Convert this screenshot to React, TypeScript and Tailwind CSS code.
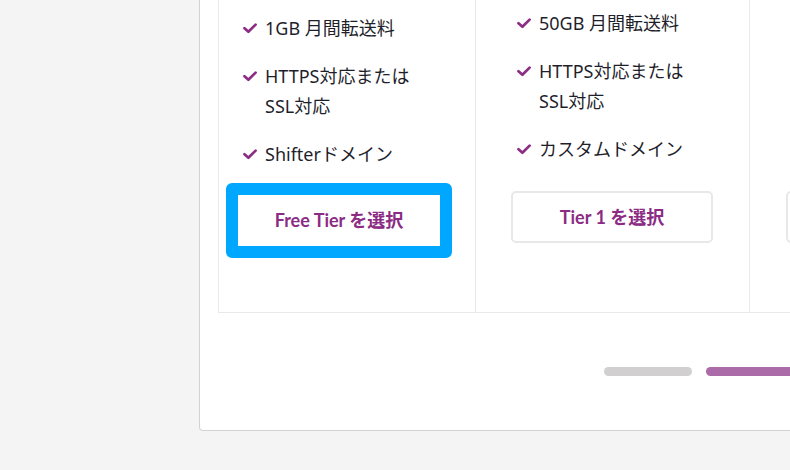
import React from "react";

function Check() {
  return (
    <svg width="14" height="11" viewBox="0 0 14 11" className="shrink-0">
      <path d="M1.5 5.2 L5.4 8.8 L12.6 1.6" fill="none" stroke="#8b2d84" strokeWidth="2.7" strokeLinecap="round" strokeLinejoin="round" />
    </svg>
  );
}

function Item({ children }: { children: React.ReactNode }) {
  return (
    <li className="flex items-start gap-[8px]">
      <span className="flex h-[30px] items-center pt-[1px]">
        <Check />
      </span>
      <span className="w-[170px] font-['Noto_Sans','Noto_Sans_CJK_JP',sans-serif] text-[18px] leading-[30px] text-[#1f1f2c]">
        {children}
      </span>
    </li>
  );
}

export default function App() {
  return (
    <div className="h-[470px] w-[790px] overflow-hidden bg-[#f4f4f4] font-['Lato','Noto_Sans_CJK_JP',sans-serif]">
      <div className="ml-[199px] w-[1100px] rounded-b-[4px] border-x border-b border-[#d2d2d2] bg-white">
        <div className="ml-[18px] flex border-b border-l border-[#e9e9e9]">
          <div className="h-[312px] w-[257px] shrink-0 border-r border-[#e9e9e9] pt-[13px]">
            <ul className="flex flex-col gap-[18px] pl-[24px]">
              <Item>1GB 月間転送料</Item>
              <Item>HTTPS対応またはSSL対応</Item>
              <Item>Shifterドメイン</Item>
            </ul>
            <button className="ml-[7px] mt-[14px] flex h-[75px] w-[226px] items-center justify-center rounded-[6px] border-[12px] border-[#00a7ff] bg-white text-[18px] font-bold text-[#8b2b84]">
              Free Tier を選択
            </button>
          </div>
          <div className="h-[312px] w-[274px] shrink-0 border-r border-[#e9e9e9] pt-[8px]">
            <ul className="flex flex-col gap-[18px] pl-[41px]">
              <Item>50GB 月間転送料</Item>
              <Item>HTTPS対応またはSSL対応</Item>
              <Item>カスタムドメイン</Item>
            </ul>
            <button className="ml-[35px] mt-[27px] flex h-[52px] w-[202px] items-center justify-center rounded-[5px] border-2 border-[#e8e8e8] bg-white text-[18px] font-bold text-[#8b2b84]">
              Tier 1 を選択
            </button>
          </div>
          <div className="h-[312px] w-[274px] shrink-0 border-r border-[#e9e9e9] pt-[8px]">
            <ul className="flex flex-col gap-[18px] pl-[41px]">
              <Item>200GB 月間転送料</Item>
              <Item>HTTPS対応またはSSL対応</Item>
              <Item>カスタムドメイン</Item>
            </ul>
            <button className="ml-[36px] mt-[27px] flex h-[52px] w-[202px] items-center justify-center rounded-[5px] border-2 border-[#e8e8e8] bg-white text-[18px] font-bold text-[#8b2b84]">
              Tier 2 を選択
            </button>
          </div>
        </div>
        <div className="flex gap-[14px] pb-[54px] pl-[404px] pt-[54px]">
          <div className="h-[9px] w-[88px] rounded-full bg-[#d1cfd0]" />
          <div className="h-[9px] w-[88px] rounded-full bg-[#ab6aa8]" />
          <div className="h-[9px] w-[88px] rounded-full bg-[#d1cfd0]" />
        </div>
      </div>
    </div>
  );
}
